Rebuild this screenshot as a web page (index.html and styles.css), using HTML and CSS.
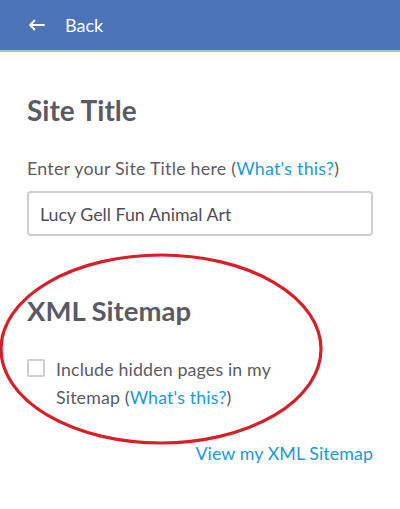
FILE: index.html
```html
<!DOCTYPE html>
<html>
	<head>
		<meta charset="UTF-8">
		<meta name="viewport" content="width=device-width,initial-scale=1">
		<title>Site Settings</title>
		<link rel="stylesheet" href="styles.css">
	</head>
	<body>
		<div class="topbar">
			<a class="back" href="#">
				<svg class="back-icon" width="17" height="12" viewBox="0 0 17 12">
					<path d="M16 6H2M6.5 1.5L2 6l4.5 4.5" fill="none" stroke="#fff" stroke-width="1.8" stroke-linecap="round" stroke-linejoin="round"/>
				</svg>
				<span>Back</span>
			</a>
		</div>
		<div class="content">
			<section class="site-title">
				<h2>Site Title</h2>
				<p class="label">Enter your Site Title here (<a href="#">What's this?</a>)</p>
				<input class="field" type="text" value="Lucy Gell Fun Animal Art">
			</section>
			<section class="sitemap">
				<h2>XML Sitemap</h2>
				<label class="check">
					<span class="box"></span>
					<span class="check-text">
						<span class="line">Include hidden pages in my</span>
						<span class="line">Sitemap (<a href="#">What's this?</a>)</span>
					</span>
				</label>
				<div class="view"><a href="#">View my XML Sitemap</a></div>
			</section>
		</div>
		<!-- hand drawn highlight over the sitemap block -->
		<svg class="circle" width="330" height="200" viewBox="0 0 330 200">
			<ellipse cx="161" cy="99" rx="160" ry="94" fill="none" stroke="#d81e27" stroke-width="3.2"/>
		</svg>
	</body>
</html>
```

FILE: styles.css
```css
body{
	position: relative;
	margin: 0;
	font-family: Lato, "Open Sans", sans-serif;
	color: #5b5b64;
	background: #fff;
}
a{
	color: #1b9ad5;
	text-decoration: none;
}

.topbar{
	height: 50px;
	background: #4c74b9;
	border-bottom: 2px solid #a9bddf;
	display: flex;
	align-items: center;
	padding-left: 28px;
}
.back{
	display: flex;
	align-items: center;
	gap: 20px;
	color: #fff;
	font-size: 18px;
}

.content{
	padding: 0 27px;
}
h2{
	margin: 0;
	font-size: 28px;
	line-height: 34px;
	font-weight: 700;
	color: #5a5a65;
}
.sitemap h2{
	font-size: 27.5px;
}
.site-title{
	padding-top: 41px;
}
.label{
	margin: 30px 0 12px;
	font-size: 17.8px;
	line-height: 22px;
	letter-spacing: 0.25px;
}
.field{
	display: block;
	box-sizing: border-box;
	width: 100%;
	height: 45px;
	margin: 0;
	padding: 0 11px;
	border: 2px solid #cacdda;
	border-radius: 4px;
	font-family: inherit;
	font-size: 17.8px;
	color: #4e4e56;
	outline: none;
}

.sitemap{
	padding-top: 58px;
}
.check{
	display: flex;
	align-items: flex-start;
	gap: 11px;
	margin-top: 27px;
	font-size: 17.8px;
	line-height: 28px;
	letter-spacing: 0.15px;
}
.box{
	flex: none;
	width: 18px;
	height: 18px;
	box-sizing: border-box;
	margin-top: 4px;
	border: 2px solid #cacdda;
	border-radius: 2px;
}
.check-text{
	display: flex;
	flex-direction: column;
}
.view{
	margin-top: 31px;
	text-align: right;
	font-size: 17.8px;
	line-height: 22px;
	letter-spacing: 0.1px;
}
.circle{
	position: absolute;
	left: 0;
	top: 250px;
	pointer-events: none;
}
```
